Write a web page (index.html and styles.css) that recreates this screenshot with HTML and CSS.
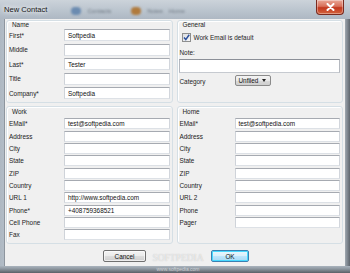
FILE: index.html
```html
<!DOCTYPE html>
<html lang="en">
<head>
    <meta charset="UTF-8">
    <title>New Contact</title>
    <link rel="stylesheet" href="styles.css">
</head>
<body>
    <div class="window">
        <!-- Title bar -->
        <div class="titlebar">
            <span class="title">New Contact</span>
            <div class="ghosts">
                <span class="ghost-icon"></span><span>Contacts</span>
                <span class="ghost-icon orange"></span><span>Notes</span>
                <span>Home</span>
            </div>
            <div class="close">
                <svg width="9" height="8" viewBox="0 0 9 8"><path d="M1.5 1 L7.5 7 M7.5 1 L1.5 7" stroke="#fff" stroke-width="2" stroke-linecap="round"/></svg>
            </div>
        </div>

        <div class="frame">
            <div class="client">
                <div class="pair top">
                    <!-- Name -->
                    <section class="group">
                        <div class="legend">Name</div>
                        <div class="fields name-fields">
                            <label>First*</label><div class="input">Softpedia</div>
                            <label>Middle</label><div class="input"></div>
                            <label>Last*</label><div class="input">Tester</div>
                            <label>Title</label><div class="input"></div>
                            <label>Company*</label><div class="input">Softpedia</div>
                        </div>
                    </section>

                    <!-- General -->
                    <section class="group general">
                        <div class="legend">General</div>
                        <div class="check-row">
                            <span class="checkbox">
                                <svg width="9" height="9" viewBox="0 0 9 9"><path d="M2 4.5 L3.8 6.6 L7.2 1.8" fill="none" stroke="#2a4f9c" stroke-width="1.5"/></svg>
                            </span>
                            <span>Work Email is default</span>
                        </div>
                        <div class="note-label">Note:</div>
                        <div class="input note"></div>
                        <div class="category-row">
                            <label>Category</label>
                            <div class="dropdown">Unfiled <span class="arrow"></span></div>
                        </div>
                    </section>
                </div>

                <div class="pair bottom">
                    <!-- Work -->
                    <section class="group">
                        <div class="legend">Work</div>
                        <div class="fields addr-fields">
                            <label>EMail*</label><div class="input">test@softpedia.com</div>
                            <label>Address</label><div class="input"></div>
                            <label>City</label><div class="input"></div>
                            <label>State</label><div class="input"></div>
                            <label>ZIP</label><div class="input"></div>
                            <label>Country</label><div class="input"></div>
                            <label>URL 1</label><div class="input">http://www.softpedia.com</div>
                            <label>Phone*</label><div class="input">+408759368521</div>
                            <label>Cell Phone</label><div class="input"></div>
                            <label>Fax</label><div class="input"></div>
                        </div>
                    </section>

                    <!-- Home -->
                    <section class="group">
                        <div class="legend">Home</div>
                        <div class="fields addr-fields">
                            <label>EMail*</label><div class="input">test@softpedia.com</div>
                            <label>Address</label><div class="input"></div>
                            <label>City</label><div class="input"></div>
                            <label>State</label><div class="input"></div>
                            <label>ZIP</label><div class="input"></div>
                            <label>Country</label><div class="input"></div>
                            <label>URL 2</label><div class="input"></div>
                            <label>Phone</label><div class="input"></div>
                            <label>Pager</label><div class="input"></div>
                        </div>
                    </section>
                </div>

                <div class="buttons">
                    <button class="btn cancel">Cancel</button>
                    <button class="btn ok">OK</button>
                </div>
            </div>
        </div>
        <div class="frame-bottom"></div>

        <div class="watermark">
            <span class="wm-big">SOFTPEDIA</span>
            <span class="wm-small">www.softpedia.com</span>
        </div>
    </div>
</body>
</html>
```

FILE: styles.css
```css
body {
    margin: 0;
    background: #fff;
    font-family: 'Liberation Sans', Arial, sans-serif;
    color: #1e1e1e;
}
.window {
    position: relative;
    width: 350px;
    height: 273px;
    overflow: hidden;
    background: linear-gradient(180deg, #b9c3cd 0%, #a7b2bd 100%);
}

/* Title bar */
.titlebar {
    height: 19px;
    display: flex;
    align-items: flex-start;
    background: linear-gradient(180deg, #ccd3da 0%, #b9c3cd 60%, #aeb8c3 100%);
}
.title {
    margin: 5px 0 0 4px;
    font-size: 7.6px;
    color: #161616;
    text-shadow: 0 0 4px #fff, 0 0 6px #fff;
}
.ghosts {
    display: flex;
    align-items: center;
    gap: 6px;
    margin: 7px 0 0 24px;
    font-size: 6px;
    color: #6d7680;
    filter: blur(1.2px);
}
.ghost-icon {
    width: 10px;
    height: 8px;
    border-radius: 4px;
    background: #6b8bb0;
}
.ghost-icon.orange {
    margin-left: 14px;
    background: #b07a3c;
}
.close {
    margin-left: auto;
    margin-right: 6px;
    width: 26px;
    height: 14px;
    display: flex;
    align-items: center;
    justify-content: center;
    border: 1px solid #7a2a1e;
    border-top: none;
    border-radius: 0 0 4px 4px;
    background: linear-gradient(180deg, #e9a797 0%, #d8705a 45%, #c2381f 55%, #d4643d 100%);
    box-shadow: inset 0 0 0 1px rgba(255,255,255,0.35);
}

/* Frame */
.frame {
    height: 247px;
    padding: 0 4px;
    display: flex;
    background: linear-gradient(90deg, #aeb8c2 0%, #b6c0ca 2%, #b6c0ca 98%, #5f666e 100%);
}
.client {
    flex: 1;
    display: flex;
    flex-direction: column;
    background: #f0f0f0;
    border-left: 1px solid #8d959e;
    border-right: 1px solid #9aa2aa;
    padding: 1px 2px 0 1px;
}
.frame-bottom {
    height: 7px;
    background: linear-gradient(180deg, #aab4be 0%, #8f98a1 40%, #5a6067 100%);
}

.pair {
    display: grid;
    grid-template-columns: 1fr 1fr;
    gap: 4px;
}
.pair.top {
    height: 84px;
}
.pair.bottom {
    height: 139px;
    margin-top: 3px;
}

/* Group box */
.group {
    border: 1px solid #d5dfe5;
    border-radius: 3px;
    box-shadow: inset 1px 1px 0 #fff;
    padding: 0 1px;
    font-size: 6.4px;
}
.legend {
    height: 8px;
    line-height: 8px;
    padding-left: 4px;
    color: #222;
}
.bottom .legend {
    height: 11px;
    line-height: 9px;
}

.fields {
    display: grid;
    grid-template-columns: 56px 1fr;
    align-items: center;
}
.name-fields {
    grid-auto-rows: 12px;
    row-gap: 2.6px;
}
.addr-fields {
    grid-auto-rows: 11px;
    row-gap: 1.35px;
}
.fields label {
    padding-left: 1px;
    color: #222;
}

.input {
    box-sizing: border-box;
    height: 100%;
    margin-right: 1px;
    background: #fff;
    border: 1px solid;
    border-color: #a6aab1 #d2d6dc #dde1e6 #cfd3d9;
    padding-left: 3px;
    display: flex;
    align-items: center;
    color: #111;
    white-space: nowrap;
}

/* General */
.check-row {
    display: flex;
    align-items: center;
    gap: 3px;
    margin: 4px 0 0 3px;
    height: 9px;
}
.checkbox {
    box-sizing: border-box;
    width: 9px;
    height: 9px;
    border: 1px solid #8e8f8f;
    background: linear-gradient(135deg, #dcdee2 0%, #f6f6f6 100%);
    display: flex;
    align-items: center;
    justify-content: center;
}
.checkbox svg {
    flex: none;
}
.note-label {
    margin: 7px 0 0 1px;
}
.input.note {
    height: 14px;
    margin-top: 3px;
    border-color: #8c9098 #b4b8bf #c6cad0 #b4b8bf;
}
.category-row {
    display: grid;
    grid-template-columns: 56px auto;
    align-items: center;
    margin-top: 1px;
    height: 12px;
}
.category-row label {
    padding-left: 1px;
    margin-top: 2px;
}
.dropdown {
    box-sizing: border-box;
    width: 36px;
    height: 11px;
    display: flex;
    align-items: center;
    gap: 4px;
    padding-left: 3px;
    border: 1px solid #8b8b8b;
    border-radius: 2px;
    background: linear-gradient(180deg, #f4f4f4 0%, #e8e8e8 50%, #d9d9d9 51%, #cfcfcf 100%);
    color: #111;
}
.arrow {
    width: 0;
    height: 0;
    border-left: 2.5px solid transparent;
    border-right: 2.5px solid transparent;
    border-top: 3px solid #222;
}

/* Buttons */
.buttons {
    display: flex;
    align-items: center;
    height: 20px;
    padding: 2px 0 0 97px;
}
.btn {
    box-sizing: border-box;
    height: 12px;
    padding: 0;
    font-family: inherit;
    font-size: 6.4px;
    color: #111;
    border: 1px solid #707070;
    border-radius: 2px;
    background: linear-gradient(180deg, #f3f3f3 0%, #ebebeb 50%, #dddddd 51%, #cfcfcf 100%);
    box-shadow: inset 0 0 0 1px rgba(255,255,255,0.6);
}
.cancel {
    width: 43px;
}
.ok {
    width: 38px;
    margin-left: 65px;
    border-color: #3c7fb1;
    background: linear-gradient(180deg, #eaf6fd 0%, #d9f0fc 50%, #bee6fd 51%, #a7d9f5 100%);
    box-shadow: inset 0 0 0 1px #48d9ff;
}

/* Watermark overlay, kept in the gap between the buttons */
.watermark {
    position: absolute;
    left: 150px;
    top: 253px;
    width: 56px;
    display: flex;
    flex-direction: column;
    align-items: center;
    pointer-events: none;
}
.wm-big {
    font-family: 'Liberation Serif', serif;
    font-size: 9.5px;
    line-height: 11px;
    color: rgba(255,255,255,0.6);
    text-shadow: 0 0 1px rgba(120,120,120,0.45);
}
.wm-small {
    margin-top: 2px;
    font-size: 5px;
    line-height: 6px;
    color: rgba(255,255,255,0.6);
}
```
